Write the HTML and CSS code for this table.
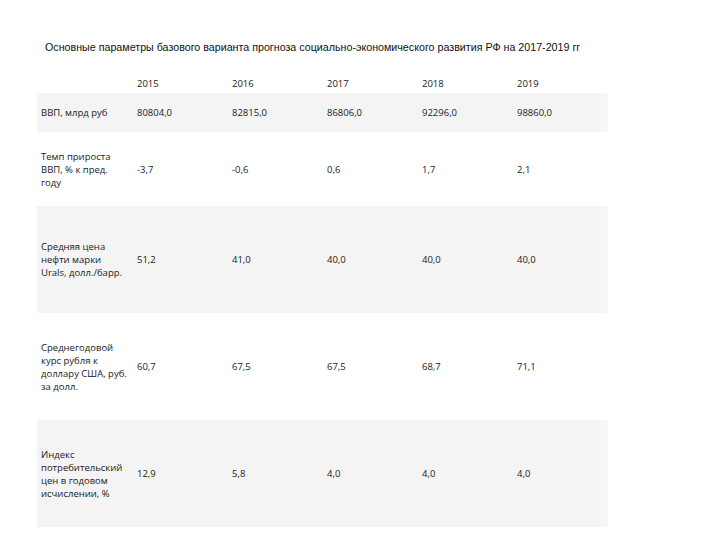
FILE: index.html
```html
<!DOCTYPE html>
<html lang="ru">
<head>
<meta charset="utf-8">
<link rel="stylesheet" href="styles.css">
</head>
<body>
<div class="page">
  <h1 class="title">Основные параметры базового варианта прогноза социально-экономического развития РФ на 2017-2019 гг</h1>
  <table class="grid">
    <colgroup>
      <col class="c-label"><col class="c-val"><col class="c-val"><col class="c-val"><col class="c-val"><col class="c-val">
    </colgroup>
    <tr class="r-head">
      <td></td><td>2015</td><td>2016</td><td>2017</td><td>2018</td><td>2019</td>
    </tr>
    <tr class="r-gdp shade">
      <td>ВВП, млрд руб</td><td>80804,0</td><td>82815,0</td><td>86806,0</td><td>92296,0</td><td>98860,0</td>
    </tr>
    <tr class="r-growth">
      <td>Темп прироста ВВП, % к пред. году</td><td>-3,7</td><td>-0,6</td><td>0,6</td><td>1,7</td><td>2,1</td>
    </tr>
    <tr class="r-oil shade">
      <td>Средняя цена нефти марки Urals, долл./барр.</td><td>51,2</td><td>41,0</td><td>40,0</td><td>40,0</td><td>40,0</td>
    </tr>
    <tr class="r-rate">
      <td>Среднегодовой курс рубля к доллару США, руб. за долл.</td><td>60,7</td><td>67,5</td><td>67,5</td><td>68,7</td><td>71,1</td>
    </tr>
    <tr class="r-cpi shade">
      <td>Индекс потребительский цен в годовом исчислении, %</td><td>12,9</td><td>5,8</td><td>4,0</td><td>4,0</td><td>4,0</td>
    </tr>
  </table>
</div>
</body>
</html>
```
FILE: styles.css
```css
html, body {
  margin: 0;
  padding: 0;
  background: #ffffff;
}
.page {
  padding: 41px 0 0 37px;
}
.title {
  margin: 0 0 0 8px;
  font-family: "Liberation Sans", Arial, sans-serif;
  font-weight: normal;
  font-size: 10.7px;
  line-height: 13px;
  color: #111;
  white-space: nowrap;
}
.grid {
  margin-top: 16px;
  border-collapse: collapse;
  table-layout: fixed;
  width: 570px;
  font-family: "Open Sans", "Noto Sans", sans-serif;
  font-size: 9.5px;
  line-height: 13px;
  color: #1a1a1a;
}
.c-label { width: 96px; }
.c-val { width: 95px; }
.grid td {
  padding: 0 4px;
  vertical-align: middle;
}
.shade td { background: #f4f4f4; }
.shade td:last-child { box-shadow: inset -7px 0 0 #f7f7f7; }
.r-head { height: 23px; }
.r-head td { padding-top: 3px; }
.r-gdp { height: 39px; }
.r-growth { height: 74px; }
.r-oil { height: 107px; }
.r-rate { height: 107px; }
.r-cpi { height: 107px; }
```
